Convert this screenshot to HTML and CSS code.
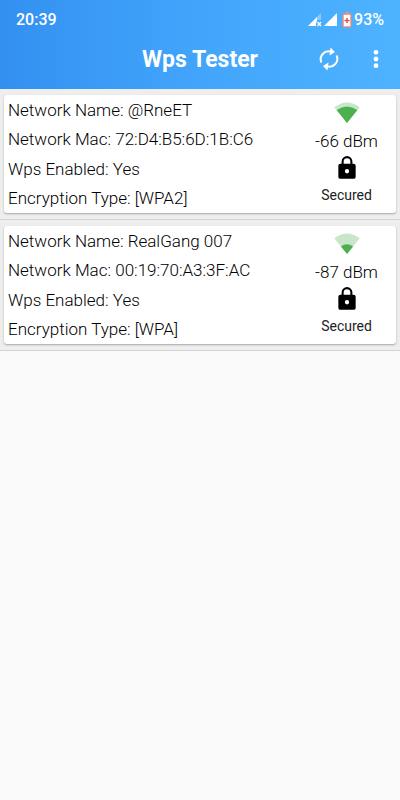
FILE: index.html
```html
<!DOCTYPE html>
<html lang="en">
<head>
<meta charset="utf-8">
<meta name="viewport" content="width=device-width, initial-scale=1">
<title>Wps Tester</title>
<link rel="stylesheet" href="styles.css">
</head>
<body>
<header class="header">
  <div class="status">
    <span>20:39</span>
    <div class="status-right">
      <svg width="14" height="14" viewBox="0 0 14 14" aria-hidden="true">
        <path d="M13 0v7H9v2.500L7.500 13H0z" fill="#fff" opacity=".35"/>
        <path d="M9 4v4l-1 1v4H0z" fill="#fff"/>
        <path d="M9.500 9l3.500 4M13 9l-3.500 4" stroke="#fff" stroke-width="1.200"/>
      </svg>
      <svg width="14" height="14" viewBox="0 0 14 14" aria-hidden="true"><path d="M13 0v13H0z" fill="#fff"/></svg>
      <svg class="battery" width="10" height="16" viewBox="0 0 10 16" aria-hidden="true">
        <path d="M3 0h4v2H3z" fill="#d9978f"/>
        <rect x="1" y="2" width="8" height="13" rx="1" fill="#fff" stroke="#e08a80" stroke-width="1.400"/>
        <path d="M5 6v5M2.500 8.500h5" stroke="#e2574a" stroke-width="1.500"/>
      </svg>
      <span>93%</span>
    </div>
  </div>
  <div class="toolbar">
    <h1 class="title">Wps Tester</h1>
    <div class="actions">
      <button class="icon-button" type="button" aria-label="Refresh">
        <svg width="24" height="24" viewBox="0 0 24 24" aria-hidden="true">
          <path d="M4.400 15.500A8 8 0 0 1 14 4.600M19.600 8.500A8 8 0 0 1 10 19.400" fill="none" stroke="#fff" stroke-width="2"/>
          <path d="M13.500 .5l4.500 4.500-5.500 3.500zM10.500 23.500L6 19l5.500-3.500z" fill="#fff"/>
        </svg>
      </button>
      <button class="icon-button" type="button" aria-label="More options">
        <svg width="24" height="24" viewBox="0 0 24 24" aria-hidden="true"><g fill="#fff"><circle cx="12" cy="5.300" r="2.400"/><circle cx="12" cy="12" r="2.400"/><circle cx="12" cy="18.700" r="2.400"/></g></svg>
      </button>
    </div>
  </div>
</header>
<main>
  <ul class="networks">
    <li class="item">
      <article class="card">
        <div class="details">
          <p>Network Name: @RneET</p>
          <p>Network Mac: 72:D4:B5:6D:1B:C6</p>
          <p>Wps Enabled: Yes</p>
          <p>Encryption Type: [WPA2]</p>
        </div>
        <div class="signal">
          <svg class="wifi" width="26" height="22" viewBox="0 0 26 22" aria-hidden="true">
            <path d="M13 21L.3 5.300Q13-4.300 25.700 5.300z" fill="#c8e6c9"/>
            <path d="M13 21L2.600 8.100Q13 .9 23.400 8.100z" fill="#4caf50"/>
          </svg>
          <p>-66 dBm</p>
          <svg class="lock" width="26" height="26" viewBox="0 0 24 24" aria-hidden="true"><path d="M18 8h-1V6A5 5 0 0 0 7 6v2H6a2 2 0 0 0-2 2v10a2 2 0 0 0 2 2h12a2 2 0 0 0 2-2V10a2 2 0 0 0-2-2zm-6 9a2 2 0 1 1 0-4 2 2 0 0 1 0 4zm3.100-9H8.900V6a3.100 3.100 0 0 1 6.200 0z"/></svg>
          <p class="security">Secured</p>
        </div>
      </article>
    </li>
    <li class="item">
      <article class="card">
        <div class="details">
          <p>Network Name: RealGang 007</p>
          <p>Network Mac: 00:19:70:A3:3F:AC</p>
          <p>Wps Enabled: Yes</p>
          <p>Encryption Type: [WPA]</p>
        </div>
        <div class="signal">
          <svg class="wifi" width="26" height="22" viewBox="0 0 26 22" aria-hidden="true">
            <path d="M13 21L.3 5.300Q13-4.300 25.700 5.300z" fill="#c8e6c9"/>
            <path d="M13 21L6.900 13.400Q13 9 19.100 13.400z" fill="#4caf50"/>
          </svg>
          <p>-87 dBm</p>
          <svg class="lock" width="26" height="26" viewBox="0 0 24 24" aria-hidden="true"><path d="M18 8h-1V6A5 5 0 0 0 7 6v2H6a2 2 0 0 0-2 2v10a2 2 0 0 0 2 2h12a2 2 0 0 0 2-2V10a2 2 0 0 0-2-2zm-6 9a2 2 0 1 1 0-4 2 2 0 0 1 0 4zm3.100-9H8.900V6a3.100 3.100 0 0 1 6.200 0z"/></svg>
          <p class="security">Secured</p>
        </div>
      </article>
    </li>
  </ul>
</main>
</body>
</html>
```
FILE: styles.css
```css
* {
  box-sizing: border-box;
}

body {
  margin: 0;
  min-height: 100vh;
  background: #fafafa;
  color: #000;
  font-family: Roboto, "Liberation Sans", sans-serif;
  font-size: 17px;
  font-weight: 300;
  line-height: 20px;
}

h1,
p,
ul {
  margin: 0;
  padding: 0;
}

svg {
  display: block;
  flex: none;
}

.header {
  color: #fff;
  background: linear-gradient(90deg, #3390f1, #42a5fb 50%, #4eb3ff);
}

.status {
  display: flex;
  justify-content: space-between;
  padding: 10px 16px 0;
  font-size: 16px;
  font-weight: 500;
}

.status-right {
  display: flex;
  align-items: center;
  gap: 2px;
}

.battery {
  margin-left: 2px;
}

.toolbar {
  display: grid;
  grid-template-columns: 1fr auto 1fr;
  align-items: center;
  padding: 5px 12px 6px;
}

.title {
  grid-column: 2;
  padding-top: 2px;
  font-size: 23px;
  font-weight: 700;
  line-height: 28px;
}

.actions {
  display: flex;
  justify-content: flex-end;
  gap: 23px;
}

.icon-button {
  display: flex;
  align-items: center;
  height: 48px;
  padding: 0;
  border: 0;
  background: none;
  cursor: pointer;
}

.networks {
  list-style: none;
}

.item {
  padding: 6px 4px;
  background: #eee;
  border-bottom: 1px solid #d3d3d3;
}

.card {
  display: grid;
  grid-template-columns: 1fr 99px;
  background: #fff;
  border-radius: 3px;
  box-shadow: 0 1px 2px rgba(0, 0, 0, .3);
}

.details {
  display: flex;
  flex-direction: column;
  justify-content: space-between;
  padding: 5px 4px;
}

.signal {
  display: flex;
  flex-direction: column;
  align-items: center;
  padding: 7px 0 8px;
}

.wifi {
  margin-bottom: 7px;
}

.lock {
  margin: 4px 0;
}

.security {
  color: #222;
  font-size: 14px;
  font-weight: 400;
}
```
